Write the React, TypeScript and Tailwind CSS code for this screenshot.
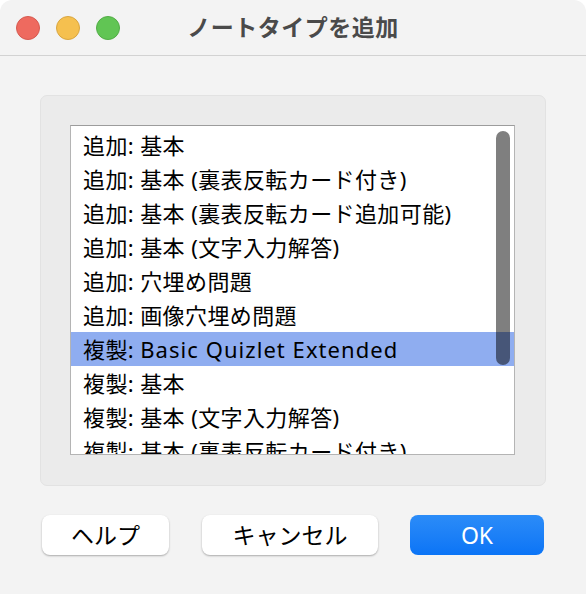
const items = [
  "追加: 基本",
  "追加: 基本 (裏表反転カード付き)",
  "追加: 基本 (裏表反転カード追加可能)",
  "追加: 基本 (文字入力解答)",
  "追加: 穴埋め問題",
  "追加: 画像穴埋め問題",
  "複製: Basic Quizlet Extended",
  "複製: 基本",
  "複製: 基本 (文字入力解答)",
  "複製: 基本 (裏表反転カード付き)",
];

const selected = 6;

// latin words render a bit wider than the cjk ones
function Label({ text }: { text: string }) {
  const parts = text.split(/([A-Za-z][A-Za-z ]*[A-Za-z])/);
  return (
    <>
      {parts.map((p, i) =>
        i % 2 === 1 ? (
          <span key={i} className="tracking-[1.05px]">{p}</span>
        ) : (
          <span key={i}>{p}</span>
        )
      )}
    </>
  );
}

export default function App() {
  return (
    <div
      className="w-[586px] h-[594px] bg-white"
      style={{ fontFamily: '"Noto Sans", "Noto Sans CJK JP", sans-serif' }}
    >
      <div className="w-full h-full bg-[#f3f3f3] rounded-t-[12px] flex flex-col">
        {/* title bar */}
        <div className="h-[56px] grid grid-cols-[1fr_auto_1fr] items-center border-b border-[#d2d2d2]">
          <div className="flex flex-row gap-4 pl-4">
            <span className="w-6 h-6 rounded-full bg-[#ee6a5f] border border-[#d65a50]" />
            <span className="w-6 h-6 rounded-full bg-[#f5c04f] border border-[#d9a640]" />
            <span className="w-6 h-6 rounded-full bg-[#61c554] border border-[#52ad46]" />
          </div>
          <h1 className="text-[23px] font-bold text-[#4a4a4a] tracking-[0.5px]">ノートタイプを追加</h1>
          <div />
        </div>

        {/* group box */}
        <div className="mt-[39px] mx-[40px] h-[391px] bg-[#ebebeb] border border-[#e2e2e2] rounded-[7px] pt-[29px] pl-[29px] pr-[30px]">
          <div className="relative h-[330px] bg-white border border-[#b4b4b4] border-t-[#9c9c9c] overflow-hidden pt-[2px]">
            {items.map((item, i) => (
              <div
                key={item}
                className={
                  "h-[34px] leading-[34px] pl-3 text-[22px] tracking-[0.4px] text-black whitespace-nowrap " +
                  (i === selected ? "bg-[#8fadf0]" : "")
                }
              >
                <Label text={item} />
              </div>
            ))}
            <div className="absolute right-[4px] top-[5px] w-[14px] h-[234px] rounded-full bg-black/50" />
          </div>
        </div>

        {/* buttons */}
        <div className="mt-[29px] flex flex-row pl-[42px]">
          <button className="w-[127px] h-[40px] bg-white rounded-[8px] shadow-[0_1px_2px_rgba(0,0,0,0.3)] text-[23px] text-black">
            ヘルプ
          </button>
          <button className="ml-[33px] w-[176px] h-[40px] bg-white rounded-[8px] shadow-[0_1px_2px_rgba(0,0,0,0.3)] text-[23px] text-black">
            キャンセル
          </button>
          <button className="ml-[32px] w-[134px] h-[40px] rounded-[8px] bg-gradient-to-b from-[#2b8cf8] to-[#0a74f6] text-[23px] text-white">
            OK
          </button>
        </div>
      </div>
    </div>
  );
}
